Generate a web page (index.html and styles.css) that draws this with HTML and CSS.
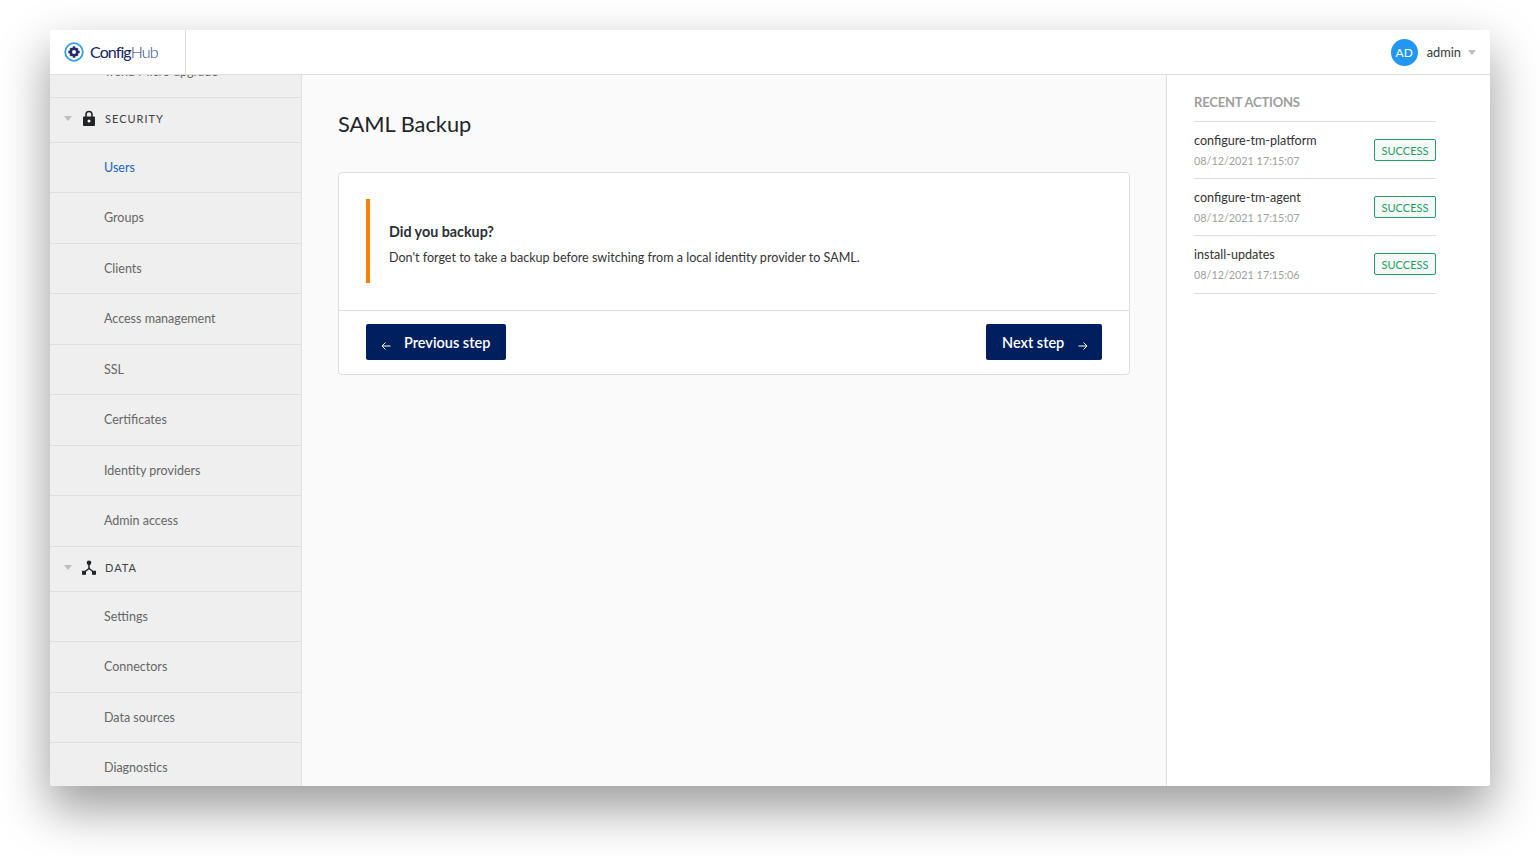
FILE: index.html
```html
<!DOCTYPE html>
<html lang="en">
<head>
    <meta charset="UTF-8">
    <meta name="viewport" content="width=device-width, initial-scale=1.0">
    <title>SAML Backup</title>
    <link rel="stylesheet" href="styles.css">
</head>
<body>
    <div class="window">
        <header class="topbar">
            <div class="brand">
                <svg class="brand-icon" width="20" height="20" viewBox="0 0 20 20">
                    <circle cx="10" cy="10" r="8.8" fill="none" stroke="#2f9fe0" stroke-width="1.8"/>
                    <circle cx="10" cy="10" r="3.300" fill="none" stroke="#2b2a6b" stroke-width="2.600"/>
                    <path d="M8.800 4.300h2.400v2.400H8.800zM8.800 13.300h2.400v2.400H8.800zM4.300 8.800h2.400v2.400H4.300zM13.300 8.800h2.400v2.400h-2.400zM5.400 7.100l1.700-1.700 1.600 1.600-1.700 1.700zM11.300 13l1.700-1.700 1.600 1.600-1.700 1.700zM12.900 5.400l1.700 1.700-1.600 1.600-1.700-1.700zM7 11.300L8.700 13l-1.600 1.600-1.700-1.700z" fill="#2b2a6b"/>
                </svg>
                <span class="brand-name">Config<span class="brand-hub">Hub</span></span>
            </div>
            <div class="user">
                <span class="avatar">AD</span>
                <span class="user-name">admin</span>
                <span class="caret"></span>
            </div>
        </header>
        <div class="body">
            <nav class="sidebar">
                <a class="item item-clipped">Trend Micro upgrade</a>
                <div class="section">
                    <span class="caret"></span>
                    <svg class="section-icon" width="14" height="16" viewBox="0 0 14 16">
                        <path d="M2 6.500h10a1 1 0 0 1 1 1V15a1 1 0 0 1-1 1H2a1 1 0 0 1-1-1V7.500a1 1 0 0 1 1-1z" fill="#212529"/>
                        <path d="M4 7V4.500a3 3 0 0 1 6 0V7" fill="none" stroke="#212529" stroke-width="1.600"/>
                        <circle cx="7" cy="11" r="1.500" fill="#fff"/>
                    </svg>
                    <span>SECURITY</span>
                </div>
                <a class="item active">Users</a>
                <a class="item">Groups</a>
                <a class="item">Clients</a>
                <a class="item">Access management</a>
                <a class="item">SSL</a>
                <a class="item">Certificates</a>
                <a class="item">Identity providers</a>
                <a class="item">Admin access</a>
                <div class="section">
                    <span class="caret"></span>
                    <svg class="section-icon" width="14" height="15" viewBox="0 0 14 15">
                        <circle cx="7" cy="2.800" r="2.300" fill="#212529"/>
                        <path d="M7 4v4.500M7 8.500L2.500 12M7 8.500l4.500 3.500" fill="none" stroke="#212529" stroke-width="1.500"/>
                        <rect x="0" y="10.800" width="4" height="4" fill="#212529"/>
                        <rect x="10" y="10.800" width="4" height="4" fill="#212529"/>
                    </svg>
                    <span>DATA</span>
                </div>
                <a class="item">Settings</a>
                <a class="item">Connectors</a>
                <a class="item">Data sources</a>
                <a class="item">Diagnostics</a>
            </nav>
            <main class="content">
                <h1 class="title">SAML Backup</h1>
                <div class="card">
                    <div class="card-body">
                        <div class="notice">
                            <p class="notice-title">Did you backup?</p>
                            <p class="notice-text">Don't forget to take a backup before switching from a local identity provider to SAML.</p>
                        </div>
                    </div>
                    <div class="card-footer">
                        <button class="btn btn-prev" type="button">
                            <svg width="10" height="10" viewBox="0 0 10 10"><path d="M9.500 5H1M4.500 1.500L1 5l3.500 3.500" fill="none" stroke="#fff" stroke-width="1"/></svg>
                            Previous step
                        </button>
                        <button class="btn btn-next" type="button">
                            Next step
                            <svg width="10" height="10" viewBox="0 0 10 10"><path d="M.5 5H9M5.500 1.500L9 5 5.500 8.500" fill="none" stroke="#fff" stroke-width="1"/></svg>
                        </button>
                    </div>
                </div>
            </main>
            <aside class="actions">
                <h2 class="actions-title">RECENT ACTIONS</h2>
                <div class="action">
                    <div class="action-info">
                        <div class="action-name">configure-tm-platform</div>
                        <div class="action-date">08/12/2021 17:15:07</div>
                    </div>
                    <span class="badge">SUCCESS</span>
                </div>
                <div class="action">
                    <div class="action-info">
                        <div class="action-name">configure-tm-agent</div>
                        <div class="action-date">08/12/2021 17:15:07</div>
                    </div>
                    <span class="badge">SUCCESS</span>
                </div>
                <div class="action">
                    <div class="action-info">
                        <div class="action-name">install-updates</div>
                        <div class="action-date">08/12/2021 17:15:06</div>
                    </div>
                    <span class="badge">SUCCESS</span>
                </div>
            </aside>
        </div>
    </div>
</body>
</html>
```

FILE: styles.css
```css
body {
    font-family: Lato, "Open Sans", sans-serif;
    background-color: #fff;
    margin: 0;
    padding: 30px 50px 70px;
    height: 856px;
    box-sizing: border-box;
    overflow: hidden;
    color: #212529;
}

.window {
    height: 756px;
    display: flex;
    flex-direction: column;
    background-color: #fff;
    border-radius: 3px;
    overflow: hidden;
    box-shadow: 0 22px 48px 2px rgba(0, 0, 0, 0.38);
}

.topbar {
    flex: 0 0 45px;
    display: flex;
    justify-content: space-between;
    align-items: center;
    background-color: #fff;
    border-bottom: 1px solid #dedede;
    box-sizing: border-box;
}

.brand {
    width: 136px;
    height: 44px;
    display: flex;
    align-items: center;
    gap: 6px;
    padding-left: 14px;
    box-sizing: border-box;
    border-right: 1px solid #dedede;
}

.brand-name {
    font-size: 16px;
    letter-spacing: -0.9px;
    padding-bottom: 1px;
    color: #14245f;
}

.brand-hub {
    font-weight: 300;
    color: #27417f;
}

.user {
    display: flex;
    align-items: center;
    padding-right: 14px;
}

.avatar {
    width: 27px;
    height: 27px;
    border-radius: 50%;
    background-color: #2196f3;
    color: #fff;
    font-size: 12px;
    display: flex;
    justify-content: center;
    align-items: center;
}

.user-name {
    font-size: 12.800px;
    margin-left: 9px;
    margin-right: 7px;
    color: #343a40;
}

.caret {
    width: 0;
    height: 0;
    border-left: 4.500px solid transparent;
    border-right: 4.500px solid transparent;
    border-top: 5px solid #bdbdbd;
}

.body {
    flex: 1;
    display: flex;
    min-height: 0;
}

.sidebar {
    flex: 0 0 252px;
    box-sizing: border-box;
    background-color: #efefef;
    border-right: 1px solid #e0e0e0;
    overflow: hidden;
}

.item {
    display: flex;
    align-items: center;
    height: 50.500px;
    box-sizing: border-box;
    padding-left: 54px;
    font-size: 12.500px;
    color: #666;
    border-bottom: 1px solid #dedede;
}

.item-clipped {
    margin-top: -27.800px;
}

.item.active {
    color: #1565c0;
}

.section {
    display: flex;
    align-items: center;
    height: 45px;
    box-sizing: border-box;
    padding-left: 14px;
    padding-bottom: 3px;
    font-size: 11px;
    letter-spacing: 1px;
    color: #424242;
    border-bottom: 1px solid #dedede;
}

.section-icon {
    margin-left: 10px;
    margin-right: 9px;
}

.content {
    flex: 1;
    background-color: #fafafa;
    padding: 0 36px;
}

.title {
    font-size: 21.800px;
    font-weight: 400;
    line-height: 28px;
    margin: 35px 0 34px;
    color: #212529;
}

.card {
    background-color: #fff;
    border: 1px solid #dedede;
    border-radius: 4px;
}

.card-body {
    padding: 26px 27px 27px;
    border-bottom: 1px solid #dedede;
}

.notice {
    height: 84px;
    border-left: 4px solid #ff8000;
    padding-left: 19px;
    padding-top: 5px;
    display: flex;
    flex-direction: column;
    justify-content: center;
    box-sizing: border-box;
}

.notice-title {
    font-size: 14.300px;
    font-weight: 700;
    margin: 0 0 10px;
    color: #2b2f33;
}

.notice-text {
    font-size: 12.550px;
    margin: 0;
    color: #333;
}

.card-footer {
    display: flex;
    justify-content: space-between;
    padding: 13px 27px 14px;
}

.btn {
    height: 36px;
    border: none;
    border-radius: 2px;
    background-color: #001f5f;
    color: #fff;
    font-family: Lato, sans-serif;
    font-size: 14.500px;
    font-weight: 600;
    display: flex;
    align-items: center;
    padding: 0;
}

.btn svg {
    margin-top: 8px;
}

.btn-prev {
    width: 140px;
    padding-left: 15px;
    gap: 13px;
}

.btn-next {
    width: 116px;
    padding-left: 16px;
    gap: 14px;
}

.actions {
    flex: 0 0 324px;
    box-sizing: border-box;
    background-color: #fff;
    border-left: 1px solid #e0e0e0;
    padding: 0 54px 0 27px;
}

.actions-title {
    font-size: 13px;
    font-weight: 700;
    line-height: 16px;
    margin: 19px 0 11px;
    color: #9e9e9e;
    letter-spacing: -0.200px;
}

.action {
    height: 57.200px;
    box-sizing: border-box;
    border-top: 1px solid #dedede;
    display: flex;
    justify-content: space-between;
    align-items: center;
}

.action:last-child {
    border-bottom: 1px solid #dedede;
    height: 58.200px;
}

.action-info {
    padding-top: 1px;
}

.action-name {
    font-size: 12.600px;
    line-height: 16px;
    color: #333;
}

.action-date {
    font-size: 10.800px;
    line-height: 14px;
    margin-top: 5px;
    color: #a0a0a0;
}

.badge {
    width: 62px;
    height: 22px;
    box-sizing: border-box;
    border: 1px solid #1f9d63;
    border-radius: 2px;
    background-color: #f6f9f7;
    color: #1f9d63;
    font-size: 11px;
    display: flex;
    justify-content: center;
    align-items: center;
}
```
